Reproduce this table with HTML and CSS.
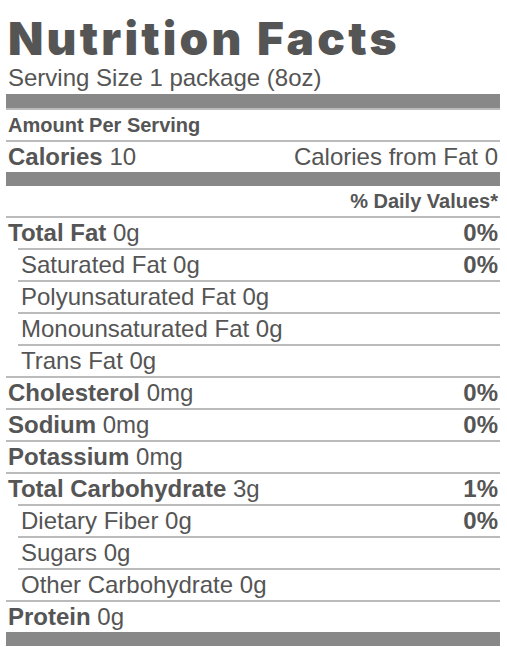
FILE: index.html
```html
<!DOCTYPE html>
<html>
<head>
<meta charset="utf-8">
<link rel="stylesheet" href="styles.css">
</head>
<body>
<div class="label">
  <h1 class="title">Nutrition Facts</h1>
  <div class="serving">Serving Size 1 package (8oz)</div>
  <div class="bar"></div>
  <div class="row small"><b>Amount Per Serving</b></div>
  <div class="row"><span><b>Calories</b> 10</span><span>Calories from Fat 0</span></div>
  <div class="bar"></div>
  <div class="row small noborder"><span></span><b>% Daily Values*</b></div>
  <div class="row"><span><b>Total Fat</b> 0g</span><b>0%</b></div>
  <div class="row sub"><span>Saturated Fat 0g</span><b>0%</b></div>
  <div class="row sub"><span>Polyunsaturated Fat 0g</span></div>
  <div class="row sub"><span>Monounsaturated Fat 0g</span></div>
  <div class="row sub"><span>Trans Fat 0g</span></div>
  <div class="row"><span><b>Cholesterol</b> 0mg</span><b>0%</b></div>
  <div class="row"><span><b>Sodium</b> 0mg</span><b>0%</b></div>
  <div class="row"><span><b>Potassium</b> 0mg</span></div>
  <div class="row"><span><b>Total Carbohydrate</b> 3g</span><b>1%</b></div>
  <div class="row sub"><span>Dietary Fiber 0g</span><b>0%</b></div>
  <div class="row sub"><span>Sugars 0g</span></div>
  <div class="row sub"><span>Other Carbohydrate 0g</span></div>
  <div class="row"><span><b>Protein</b> 0g</span></div>
  <div class="bar"></div>
</div>
</body>
</html>
```
FILE: styles.css
```css
html, body {
  margin: 0;
  padding: 0;
  background: #fff;
}
.label {
  padding: 0 7px 0 6px;
  color: #555;
  font-family: "Liberation Sans", Arial, sans-serif;
}
.title {
  margin: 0;
  padding: 15px 0 0 2px;
  height: 60px;
  box-sizing: border-box;
  font-family: "Inter", "Liberation Sans", sans-serif;
  font-weight: 900;
  font-size: 46px;
  line-height: 46px;
  letter-spacing: 3.2px;
}
.serving {
  font-size: 24px;
  line-height: 28px;
  height: 34px;
  padding: 4px 0 0 2px;
  box-sizing: border-box;
}
.bar {
  height: 14px;
  background: #888;
}
.row {
  display: flex;
  justify-content: space-between;
  align-items: center;
  height: 30px;
  border-top: 2px solid #bbb;
  font-size: 24px;
  line-height: 28px;
  padding: 0 2px;
}
.row.small {
  font-size: 20px;
}
.row.noborder {
  border-top: none;
}
.row.sub {
  margin-left: 12px;
  padding-left: 3px;
}
b {
  font-weight: 700;
}
```
